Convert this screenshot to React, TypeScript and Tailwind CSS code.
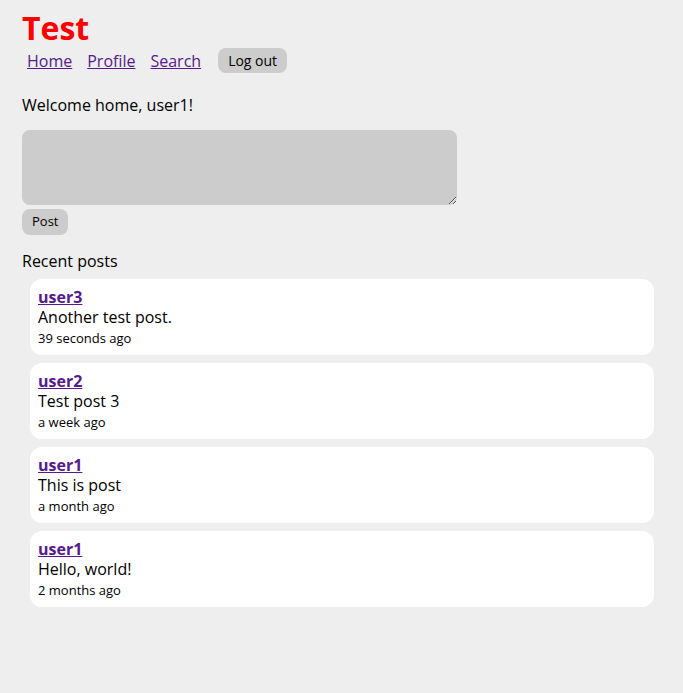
const posts = [
  { user: "user3", body: "Another test post.", time: "39 seconds ago" },
  { user: "user2", body: "Test post 3", time: "a week ago" },
  { user: "user1", body: "This is post", time: "a month ago" },
  { user: "user1", body: "Hello, world!", time: "2 months ago" },
];

export default function App() {
  return (
    <div
      className="min-h-screen bg-[#eeeeee] px-[22px] pt-[9px] text-black"
      style={{ fontFamily: '"Open Sans", sans-serif' }}
    >
      <h1 className="text-[32px] font-bold leading-[38px] text-[#ff0000]">Test</h1>
      <nav className="flex h-[27px] items-center gap-[15px] pl-[5px] text-[16px]">
        <a href="#" className="text-[#551a8b] underline">Home</a>
        <a href="#" className="text-[#551a8b] underline">Profile</a>
        <a href="#" className="text-[#551a8b] underline">Search</a>
        <button className="ml-[2px] h-[25px] rounded-[8px] bg-[#cccccc] px-[10px] text-[14px] leading-[25px]">
          Log out
        </button>
      </nav>
      <p className="mt-[19px] text-[16px] leading-[24px]">Welcome home, user1!</p>
      <textarea className="mt-[13px] block h-[75px] w-[435px] rounded-[8px] bg-[#cccccc] outline-none" />
      <button className="mt-[4px] h-[26px] rounded-[8px] bg-[#cccccc] px-[10px] text-[13px]">Post</button>
      <h2 className="mt-[14px] text-[16px] leading-[24px]">Recent posts</h2>
      <ul className="ml-[8px] mr-[7px] mt-[6px] flex flex-col gap-[8px]">
        {posts.map((p, i) => (
          <li key={i} className="h-[76px] rounded-[12px] bg-white px-[8px] pt-[8px]">
            <a href="#" className="block text-[16px] font-bold leading-[20px] text-[#551a8b] underline">
              {p.user}
            </a>
            <div className="text-[16px] leading-[21px]">{p.body}</div>
            <div className="text-[13px] leading-[21px]">{p.time}</div>
          </li>
        ))}
      </ul>
    </div>
  );
}
